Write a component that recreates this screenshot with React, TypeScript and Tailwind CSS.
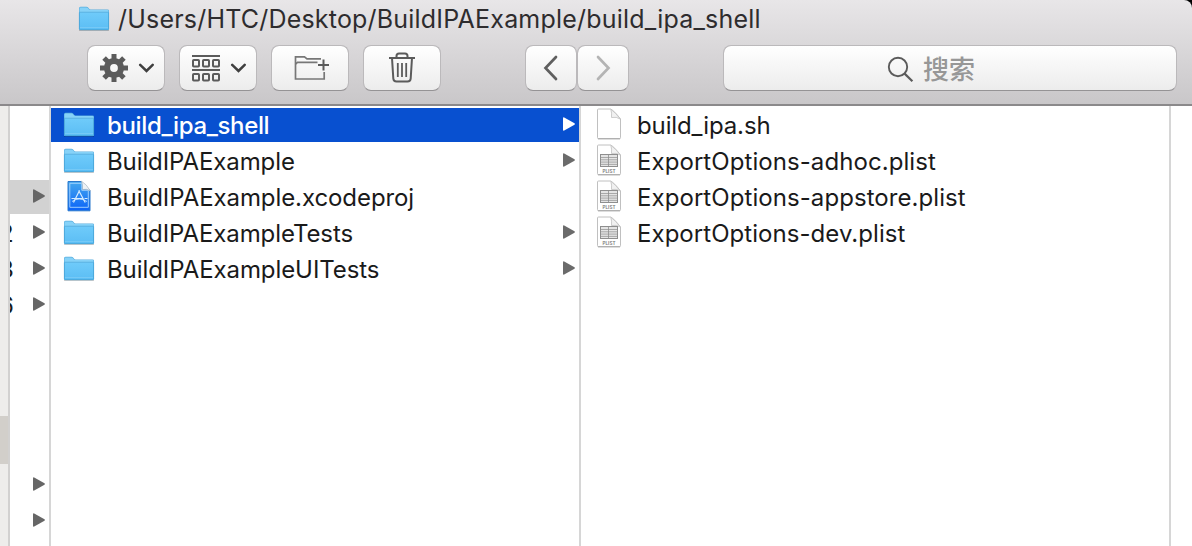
import React from "react";
import clsx from "clsx";

function FolderIcon({ id }: { id: string }) {
  return (
    <svg width="32" height="28" viewBox="0 0 32 28" className="-mt-px block shrink-0">
      <defs>
        <linearGradient id={id} x1="0" y1="0" x2="0" y2="1">
          <stop offset="0" stopColor="#6fcbfa" />
          <stop offset="1" stopColor="#5bbdf4" />
        </linearGradient>
      </defs>
      <path d="M1 24.800h30v1.200H1z" fill="#000" opacity=".2" />
      <path d="M1 3.300Q1 1.800 2.500 1.800H8.500q1 0 1.600.8l1 1.200q.5.600 1.400.6h17Q31 4.400 31 5.800v17.700Q31 25 29.500 25h-27Q1 25 1 23.500z" fill="#5aaede" />
      <path d="M1.500 3.700Q1.500 2.400 2.600 2.400H8.500q.8 0 1.300.7l1 1.200q.6.700 1.500.7h17.100q1.100 0 1.100 1V7.500h-29z" fill="#86d2f8" />
      <path d="M1 7.500h30v16Q31 25 29.500 25h-27Q1 25 1 23.500z" fill={`url(#${id})`} />
      <path d="M1 7.200h30" stroke="#57b0e0" strokeWidth=".8" />
      <path d="M1.500 22.500h29" stroke="#84d0f7" strokeWidth=".6" />
      <path d="M1.400 7.500v16q0 1.200 1.200 1.200h26.800q1.200 0 1.200-1.200v-16" fill="none" stroke="#459fd2" strokeWidth=".8" />
    </svg>
  );
}

function DocIcon({ plist }: { plist?: boolean }) {
  return (
    <svg width="26" height="32" viewBox="0 0 26 32" className="-mt-0.5 block shrink-0">
      <path d="M1.500 2Q1.500 1 2.500 1H14.500Q18 2.500 24.500 11V29.700q0 1-1 1H2.500q-1 0-1-1z" fill="#fff" stroke="#c0c0c0" strokeWidth="1" />
      <path d="M2 30.800h22" stroke="#a2a2a2" strokeWidth=".9" />
      <path d="M14.800 1.200Q16 5 15.500 9.500 20.500 8.500 24.200 11 20 5 14.800 1.200z" fill="#f1f1f1" stroke="#c0c0c0" strokeWidth=".8" />
      {plist && (
        <>
          <rect x="4.500" y="10.500" width="17" height="12" fill="#e4e4e4" stroke="#8e8e8e" strokeWidth="1" />
          <path d="M5 13.500h16M5 15.800h16M5 18.100h16M5 20.400h16" stroke="#a0a0a0" strokeWidth=".9" />
          <path d="M12.500 11v11" stroke="#8e8e8e" strokeWidth=".8" />
          <text x="13" y="28.800" textAnchor="middle" fontFamily="Inter, sans-serif" fontSize="4.600" fontWeight="600" fill="#777">
            PLIST
          </text>
        </>
      )}
    </svg>
  );
}

function XcodeIcon() {
  return (
    <svg width="26" height="32" viewBox="0 0 26 32" className="-mt-0.5 block shrink-0">
      <defs>
        <linearGradient id="xc" x1="0" y1="0" x2="0" y2="1">
          <stop offset="0" stopColor="#45a8ee" />
          <stop offset="1" stopColor="#0a62f8" />
        </linearGradient>
      </defs>
      <path d="M2 1.500h13.500L24 10.500v20.300H2z" fill="url(#xc)" stroke="#2a78cc" />
      <path d="M3.800 3.300h12v7h6.500v17H3.800z" fill="none" stroke="#a9d6ff" strokeWidth=".9" />
      <path d="M15.500 1.200Q17 5 16.500 9.500 21 8.500 24.300 10.800 20.500 4 15.500 1.200z" fill="#eef2f5" stroke="#a9b6c1" strokeWidth=".7" />
      <g fill="none" stroke="#d5ecff" strokeWidth="1.200">
        <path d="M13.500 10.500L7.500 22.500M12.700 10.500l6.500 12M5.500 18.500h11M18.500 18.500h3" />
        <path d="M6 21.500q7-5 15 0" strokeWidth=".8" />
      </g>
    </svg>
  );
}

function Arrow({ className }: { className?: string }) {
  return (
    <svg width="12" height="14" viewBox="0 0 12 14" className={clsx("block shrink-0", className)}>
      <path d="M0 1.200Q0 0 1.200.4L11.500 6.300q.7.700 0 1.400L1.200 13.600Q0 14 0 12.800z" fill="currentColor" />
    </svg>
  );
}

function Chevron() {
  return (
    <svg width="16" height="10" viewBox="0 0 16 10" className="block">
      <path d="M2.200 1.900L8.500 8l6.200-6.100" fill="none" stroke="#3f3f3f" strokeWidth="2.500" strokeLinecap="round" />
    </svg>
  );
}

function ToolButton({ className, children }: { className?: string; children?: React.ReactNode }) {
  return (
    <button
      className={clsx(
        "flex h-[46px] shrink-0 items-center rounded-[8px] border border-[#bbb9bb] border-b-[#959395] bg-linear-to-b from-white to-[#ececec] bg-clip-padding",
        className,
      )}
    >
      {children}
    </button>
  );
}

const teeth = [0, 45, 90, 135, 180, 225, 270, 315];

function Gear() {
  return (
    <svg width="28" height="28" viewBox="0 0 28 28" className="block">
      {teeth.map((a) => (
        <path key={a} d="M11.500 0h5v6h-5z" fill="#5b5b5b" transform={`rotate(${a} 14 14)`} />
      ))}
      <circle cx="14" cy="14" r="7" fill="none" stroke="#5b5b5b" strokeWidth="6.200" />
    </svg>
  );
}

function Arrange() {
  return (
    <svg width="28" height="27" viewBox="0 0 28 27" className="block">
      <path d="M0 1h28M0 15h28" stroke="#5b5b5b" strokeWidth="2" />
      {[5, 19].map((y) =>
        [1, 11, 21].map((x) => (
          <rect key={`${x}-${y}`} x={x} y={y} width="6" height="6.500" rx=".8" fill="none" stroke="#5b5b5b" strokeWidth="2" />
        )),
      )}
    </svg>
  );
}

function NewFolder() {
  return (
    <svg width="36" height="26" viewBox="0 0 36 26" className="block">
      <g fill="none" stroke="#777" strokeWidth="1.700">
        <path d="M30.200 17v7H1.500V1.800h9l2.500 2h14" />
        <path d="M1.500 9l2-1.700h20" />
      </g>
      <path d="M29.500 4.500v11M24 10h11" stroke="#5b5b5b" strokeWidth="2" />
    </svg>
  );
}

function Trash() {
  return (
    <svg width="26" height="31" viewBox="0 0 26 31" className="-mt-0.5 block">
      <g fill="none" stroke="#5b5b5b" strokeWidth="2">
        <path d="M0 6h26" />
        <path d="M7.500 6V4q0-2.500 2.500-2.500h6q2.500 0 2.500 2.500v2" />
        <path d="M3 6l1.300 20.500q.2 3 3.200 3h11q3 0 3.200-3L23 6" />
        <path d="M8.800 11v14M13 11v14M17.200 11v14" strokeWidth="1.800" />
      </g>
    </svg>
  );
}

type Item = { name: string; kind: "folder" | "xcode" | "doc" | "plist"; tracking: string; arrow?: boolean; selected?: boolean };

const middle: Item[] = [
  { name: "build_ipa_shell", kind: "folder", tracking: "tracking-[-0.35px]", arrow: true, selected: true },
  { name: "BuildIPAExample", kind: "folder", tracking: "tracking-[-0.1px]", arrow: true },
  { name: "BuildIPAExample.xcodeproj", kind: "xcode", tracking: "tracking-[-0.08px]" },
  { name: "BuildIPAExampleTests", kind: "folder", tracking: "tracking-[-0.1px]", arrow: true },
  { name: "BuildIPAExampleUITests", kind: "folder", tracking: "tracking-[-0.08px]", arrow: true },
];

const right: Item[] = [
  { name: "build_ipa.sh", kind: "doc", tracking: "tracking-[-0.12px]" },
  { name: "ExportOptions-adhoc.plist", kind: "plist", tracking: "tracking-[0.07px]" },
  { name: "ExportOptions-appstore.plist", kind: "plist", tracking: "tracking-[0.07px]" },
  { name: "ExportOptions-dev.plist", kind: "plist", tracking: "tracking-[0.05px]" },
];

const left = [
  { label: "", arrow: false },
  { label: "", arrow: false },
  { label: "", arrow: true, selected: true },
  { label: "2", arrow: true },
  { label: "3", arrow: true },
  { label: "6", arrow: true },
  { label: "", arrow: false },
  { label: "", arrow: false },
  { label: "", arrow: false },
  { label: "", arrow: false },
  { label: "", arrow: true },
  { label: "", arrow: true },
];

function Row({ item, index }: { item: Item; index: number }) {
  return (
    <li
      className={clsx(
        "flex h-[34px] items-center pr-1",
        item.selected ? "bg-[#0850d0] text-white" : "text-[#1a1a1a]",
      )}
    >
      <span className="flex w-[30px] shrink-0 justify-center">
        {item.kind === "folder" && <FolderIcon id={`folder-${index}`} />}
        {item.kind === "xcode" && <XcodeIcon />}
        {item.kind === "doc" && <DocIcon />}
        {item.kind === "plist" && <DocIcon plist />}
      </span>
      <span className={clsx("ml-[13px] pt-0.5 whitespace-nowrap", item.tracking, item.selected && "font-medium")}>
        {item.name}
      </span>
      {item.arrow && <Arrow className={clsx("-mt-0.5 ml-auto", item.selected ? "text-white" : "text-[#6b6b6b]")} />}
    </li>
  );
}

export default function App() {
  return (
    <div className="flex h-[546px] w-[1192px] flex-col overflow-hidden bg-black font-['Inter','Noto_Sans_CJK_SC',sans-serif] text-[24px] leading-none">
      <header className="flex h-[106px] shrink-0 flex-col rounded-tr-[8px] border-b-2 border-[#8b898b] bg-linear-to-b from-[#e8e6e8] to-[#c9c7c9]">
        <div className="flex h-[38px] items-center pl-[78px] text-[#2e2c2e]">
          <FolderIcon id="folder-title" />
          <span className="ml-2 text-[25px] tracking-[0.2px] whitespace-nowrap">
            /Users/HTC/Desktop/BuildIPAExample/build_ipa_shell
          </span>
        </div>
        <div className="flex pt-[7px] pl-[87px]">
          <ToolButton className="w-[78px] gap-[10px] pl-3">
            <Gear />
            <Chevron />
          </ToolButton>
          <ToolButton className="ml-[14px] w-[78px] gap-[10px] pl-3">
            <Arrange />
            <Chevron />
          </ToolButton>
          <ToolButton className="ml-[14px] w-[78px] pl-[22px]">
            <NewFolder />
          </ToolButton>
          <ToolButton className="ml-[14px] w-[78px] justify-center">
            <Trash />
          </ToolButton>
          <ToolButton className="ml-[84px] w-[52px] justify-center">
            <svg width="16" height="26" viewBox="0 0 16 26" className="block">
              <path d="M13 2L2.500 13 13 24" fill="none" stroke="#5f5f5f" strokeWidth="2.700" strokeLinecap="round" />
            </svg>
          </ToolButton>
          <ToolButton className="w-[52px] justify-center">
            <svg width="16" height="26" viewBox="0 0 16 26" className="block">
              <path d="M3 2L13.500 13 3 24" fill="none" stroke="#b4b4b4" strokeWidth="2.700" strokeLinecap="round" />
            </svg>
          </ToolButton>
          <ToolButton className="ml-[94px] w-[454px] pt-0.5 pl-[163px] text-[#979797]">
            <svg width="27" height="27" viewBox="0 0 27 27" className="block">
              <circle cx="11" cy="11" r="9.200" fill="none" stroke="#5b5b5b" strokeWidth="1.900" />
              <path d="M17.600 17.600l7.800 7.600" stroke="#5b5b5b" strokeWidth="2.200" />
            </svg>
            <span className="ml-[9px] pt-px text-[26px] font-medium">搜索</span>
          </ToolButton>
        </div>
      </header>
      <main className="flex min-h-0 flex-1 bg-white">
        <aside className="flex w-[10px] shrink-0 flex-col border-r-2 border-[#d2d1d0] bg-[#eeedeb] pt-[310px]">
          <div className="h-12 bg-[#d2cfca]" />
        </aside>
        <ul className="flex w-[41px] shrink-0 flex-col gap-0.5 overflow-hidden border-r-2 border-[#d6d6d6] pt-0.5">
          {left.map((row, i) => (
            <li key={i} className={clsx("flex h-[34px] shrink-0 items-center pr-1", row.selected && "bg-[#d2d2d2]")}>
              <span className="-ml-[11px] pt-0.5 text-[#1a1a1a]">{row.label}</span>
              {row.arrow && <Arrow className="-mt-0.5 ml-auto text-[#666]" />}
            </li>
          ))}
        </ul>
        <ul className="flex w-[530px] shrink-0 flex-col gap-0.5 border-r-2 border-[#d6d6d6] pt-0.5 [&>li]:pl-[13px]">
          {middle.map((item, i) => (
            <Row key={item.name} item={item} index={i} />
          ))}
        </ul>
        <ul className="flex w-[590px] shrink-0 flex-col gap-0.5 border-r-2 border-[#d6d6d6] pt-0.5 [&>li]:pl-[13px]">
          {right.map((item, i) => (
            <Row key={item.name} item={item} index={i} />
          ))}
        </ul>
      </main>
    </div>
  );
}
